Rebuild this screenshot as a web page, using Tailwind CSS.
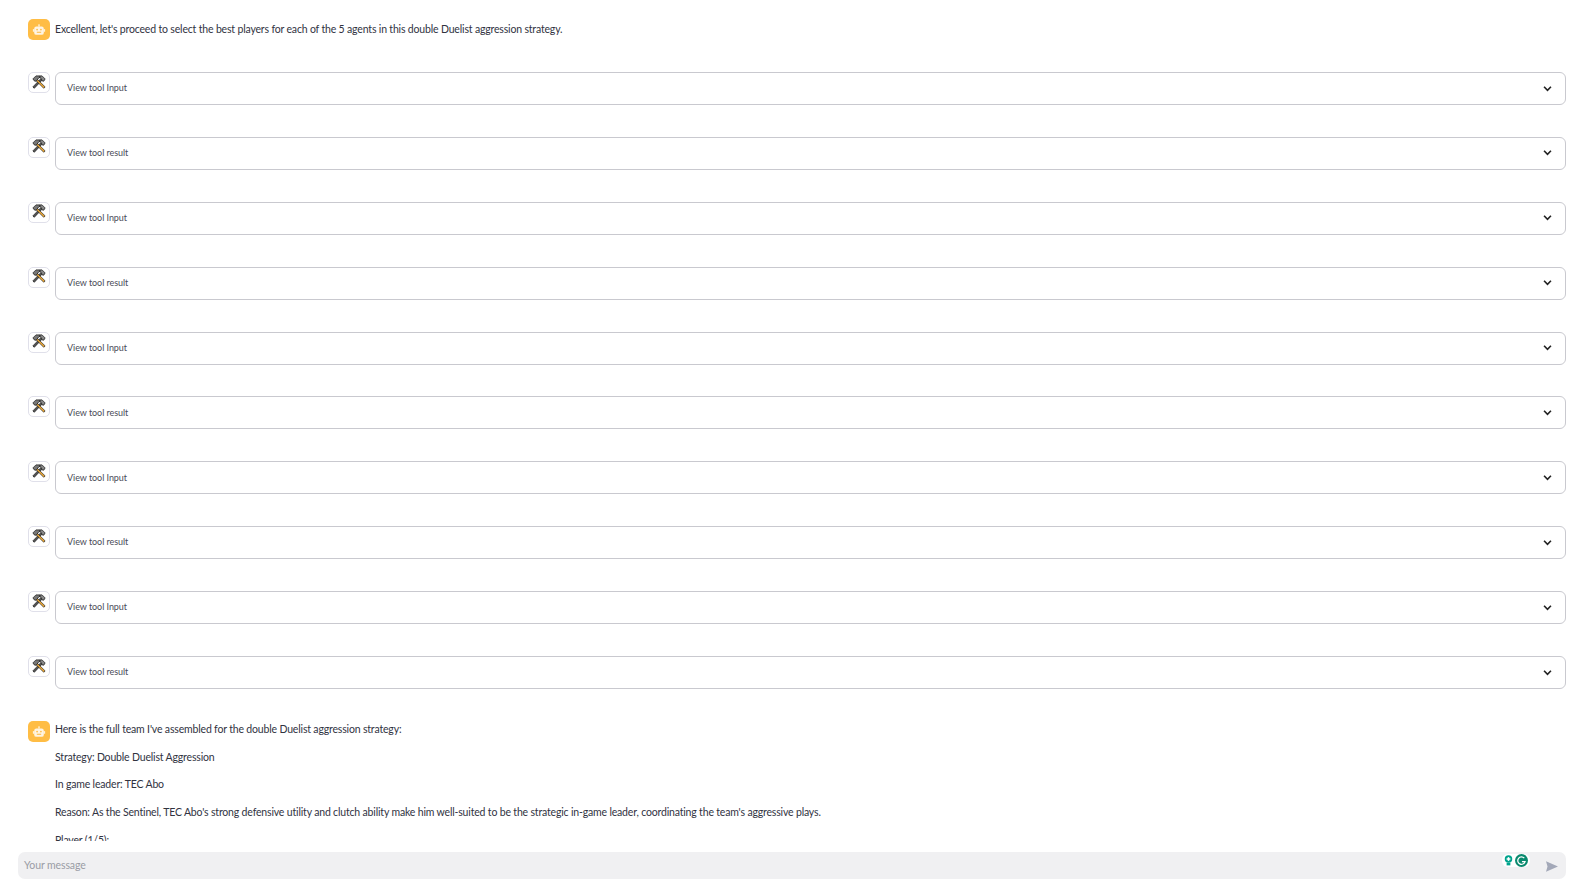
<!doctype html>
<html>
<head>
<meta charset="utf-8">
<script src="https://cdn.jsdelivr.net/npm/@tailwindcss/browser@4"></script>
</head>
<body class="bg-white overflow-hidden">
<div class="h-[896px] w-[1582px] flex flex-col font-['Lato','Open_Sans',sans-serif] text-[#31333f]">

  <!-- Messages -->
  <div class="h-[841px] overflow-hidden pl-[28px] pr-[16px] pt-[19px]">

    <div class="flex gap-[5px] h-[53px]">
      <div class="w-[22px] h-[21px] rounded-[5px] bg-[#ffbd45] flex items-center justify-center shrink-0">
        <svg viewBox="0 0 16 16" class="w-[14px] h-[14px]"><rect x="7.2" y="1.5" width="1.6" height="2.5" fill="#fff" opacity=".8"/><rect x="2.5" y="4" width="11" height="9.5" rx="2.5" fill="#fff" opacity=".85"/><rect x="1" y="7" width="1.5" height="3" fill="#fff" opacity=".8"/><rect x="13.5" y="7" width="1.5" height="3" fill="#fff" opacity=".8"/><circle cx="5.8" cy="7.5" r="1" fill="#ffbd45"/><circle cx="10.2" cy="7.5" r="1" fill="#ffbd45"/><rect x="5.5" y="10" width="5" height="1.2" fill="#ffbd45"/></svg>
      </div>
      <p class="text-[10.5px] tracking-[-0.17px] leading-[20px]">Excellent, let's proceed to select the best players for each of the 5 agents in this double Duelist aggression strategy.</p>
    </div>

    <!-- Tool calls -->
    <div id="tools" class="flex flex-col gap-[31.9px]"></div>

    <div class="flex gap-[5px] mt-[32px]">
      <div class="w-[22px] h-[21px] rounded-[5px] bg-[#ffbd45] flex items-center justify-center shrink-0">
        <svg viewBox="0 0 16 16" class="w-[14px] h-[14px]"><rect x="7.2" y="1.5" width="1.6" height="2.5" fill="#fff" opacity=".8"/><rect x="2.5" y="4" width="11" height="9.5" rx="2.5" fill="#fff" opacity=".85"/><rect x="1" y="7" width="1.5" height="3" fill="#fff" opacity=".8"/><rect x="13.5" y="7" width="1.5" height="3" fill="#fff" opacity=".8"/><circle cx="5.8" cy="7.5" r="1" fill="#ffbd45"/><circle cx="10.2" cy="7.5" r="1" fill="#ffbd45"/><rect x="5.5" y="10" width="5" height="1.2" fill="#ffbd45"/></svg>
      </div>
      <div class="flex flex-col gap-[9.7px] text-[10.5px] tracking-[-0.17px] leading-[18px] -mt-[1px]">
        <p>Here is the full team I've assembled for the double Duelist aggression strategy:</p>
        <p>Strategy: Double Duelist Aggression</p>
        <p>In game leader: TEC Abo</p>
        <p>Reason: As the Sentinel, TEC Abo's strong defensive utility and clutch ability make him well-suited to be the strategic in-game leader, coordinating the team's aggressive plays.</p>
        <p>Player (1/5):</p>
      </div>
    </div>
  </div>

  <!-- Input -->
  <div class="pl-[18px] pr-[16px] pt-[11px]">
    <div class="relative h-[27px] rounded-[7px] bg-[#f0f0f2] flex items-center justify-between pl-[6px] pr-[8px]">
      <span class="text-[10.5px] tracking-[-0.1px] text-[#9a9ca5]">Your message</span>
      <svg viewBox="0 0 16 14" class="w-[12px] h-[11px] mt-[1px]"><path d="M0 0 16 7 0 14 2 7z" fill="#a3a8b8"/></svg>
      <div class="absolute right-[36px] top-[2px] flex items-center gap-[2px] bg-white rounded-[6px] px-[2px]">
        <svg viewBox="0 0 12 14" class="w-[9px] h-[11px]"><circle cx="6" cy="5" r="5" fill="#00a38d"/><rect x="3.5" y="10" width="5" height="3.5" fill="#00a38d"/><rect x="5" y="2.5" width="2" height="5" fill="#fff"/><rect x="3.5" y="4" width="5" height="2" fill="#fff"/></svg>
        <svg viewBox="0 0 14 14" class="w-[13px] h-[13px]"><circle cx="7" cy="7" r="7" fill="#0a8a6f"/><path d="M10 4.5A4 4 0 1 0 10.8 8.2H7.5" fill="none" stroke="#fff" stroke-width="1.4"/></svg>
      </div>
    </div>
  </div>
</div>

<script>
  const labels = ["View tool Input", "View tool result"];
  const tools = document.getElementById("tools");

  for (let i = 0; i < 10; i++) {
    const row = document.createElement("div");
    row.className = "flex gap-[5px]";
    row.innerHTML = `
      <div class="w-[22px] h-[21px] rounded-[5px] border border-[#e0e0ea] flex items-center justify-center shrink-0">
        <svg viewBox="0 0 16 16" class="w-[14px] h-[14px] -mt-[2px]">
          <path d="M9.8 4.5 1 13.6 2.6 15.2 11.4 6z" fill="#555" stroke="#111" stroke-width=".8"/>
          <path d="M15 4.5 11.5 1H8.5L8 2.5 10 3.5 12 7 13.5 7z" fill="#888" stroke="#111" stroke-width=".8"/>
          <path d="M6.2 5 15 13.6 13.4 15.2 4.6 6.4z" fill="#f0a830" stroke="#222" stroke-width=".8"/>
          <path d="M1 4.5 4.5 1H8.5L9.5 2.5 7.5 3.5 5 7 3 7z" fill="#777" stroke="#111" stroke-width=".8"/>
        </svg>
      </div>
      <div class="flex-1 h-[33px] rounded-[6px] border border-[#c9c9cf] flex items-center justify-between pl-[11px] pr-[12px]">
        <span class="text-[9px] tracking-[-0.05px] text-[#4a4c58] -mt-[1px]">${labels[i % 2]}</span>
        <svg viewBox="0 0 16 16" class="w-[11px] h-[11px] -mt-[1px]" fill="none" stroke="#222" stroke-width="2.4"><path d="M3 5.5 8 10.5 13 5.5"/></svg>
      </div>`;
    tools.appendChild(row);
  }
</script>
</body>
</html>
